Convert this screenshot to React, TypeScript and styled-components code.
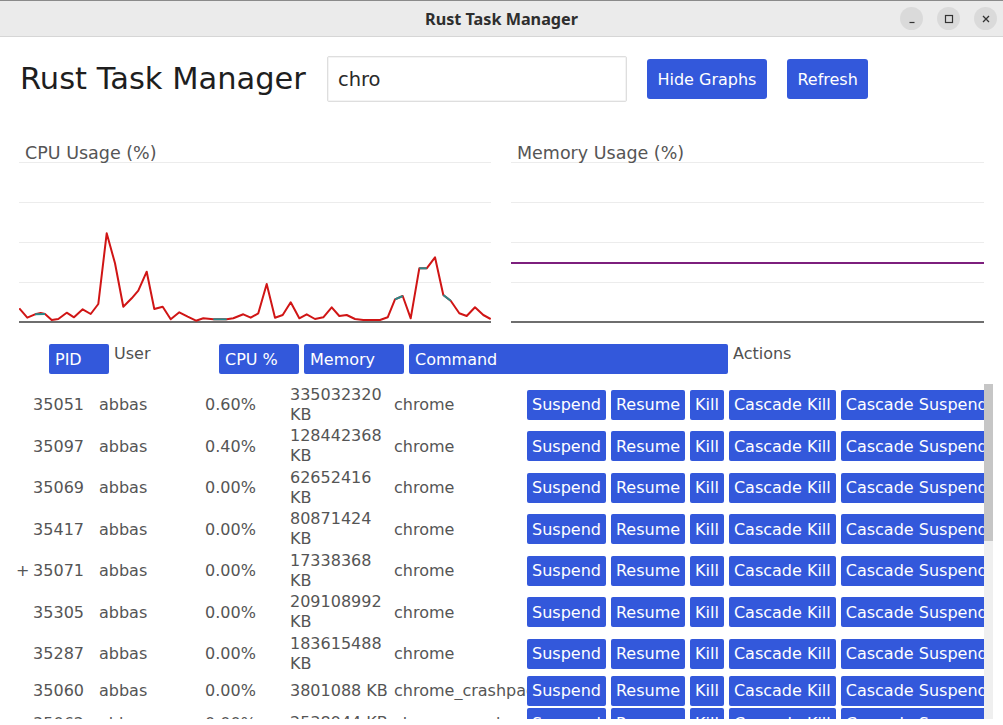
import React from "react";
import styled, { createGlobalStyle } from "styled-components";

const Global = createGlobalStyle`
  html, body { margin: 0; padding: 0; background: #ffffff; }
  body { font-family: "DejaVu Sans", "Liberation Sans", sans-serif; overflow: hidden; }
  * { box-sizing: border-box; }
`;

const Window = styled.div`
  width: 1003px;
  height: 725px;
  display: flex;
  flex-direction: column;
  background: #ffffff;
  overflow: hidden;
`;

const TitleBar = styled.div`
  height: 37px;
  flex-shrink: 0;
  display: grid;
  grid-template-columns: 1fr auto 1fr;
  align-items: center;
  background: #ebebeb;
  border-top: 1px solid #8a8a8a;
  border-bottom: 1px solid #d6d6d6;
`;

const Title = styled.div`
  grid-column: 2;
  font-family: "Noto Sans", "DejaVu Sans", sans-serif;
  font-weight: 700;
  font-size: 16.2px;
  color: #2e2e2e;
`;

const WinButtons = styled.div`
  grid-column: 3;
  justify-self: end;
  display: flex;
  gap: 14px;
  padding-right: 6px;
`;

const WinButton = styled.div`
  width: 23px;
  height: 23px;
  border-radius: 50%;
  background: #dadada;
  display: flex;
  align-items: center;
  justify-content: center;
  color: #333;
`;

const Header = styled.div`
  display: flex;
  align-items: center;
  margin-top: 19px;
  padding-left: 20px;
  height: 46px;
`;

const Heading = styled.h1`
  margin: 0 21px 0 0;
  font-size: 30.5px;
  font-weight: 400;
  color: #1e1e1e;
  line-height: 36px;
  white-space: nowrap;
`;

const Search = styled.div`
  width: 300px;
  height: 46px;
  flex-shrink: 0;
  border: 1px solid #dedede;
  box-shadow: inset 0 0 0 1px #f4f4f4;
  border-radius: 2px;
  padding-left: 10px;
  display: flex;
  align-items: center;
  font-size: 19.5px;
  color: #2a2a2a;
  margin-right: 20px;
`;

const TopButton = styled.button`
  height: 40px;
  padding: 0 10.5px;
  margin-right: 20px;
  border: none;
  border-radius: 3px;
  background: #3358db;
  color: #ffffff;
  font-family: "DejaVu Sans", sans-serif;
  font-size: 16px;
  cursor: pointer;
`;

const Charts = styled.div`
  display: grid;
  grid-template-columns: 472px 473px;
  column-gap: 20px;
  padding-left: 19px;
  margin-top: 41px;
`;

const ChartPanel = styled.div`
  display: flex;
  flex-direction: column;
`;

const ChartLabel = styled.div<{ $indent: number }>`
  font-size: 17.5px;
  color: #555555;
  line-height: 20px;
  padding-left: ${(p) => p.$indent}px;
  margin-bottom: -1px;
  position: relative;
  z-index: 1;
`;

const TableHeader = styled.div`
  display: grid;
  grid-template-columns: 60px 100px 80px 100px 319px auto;
  column-gap: 5px;
  align-items: start;
  padding-left: 49px;
  margin-top: 20px;
`;

const SortButton = styled.div`
  height: 30px;
  background: #3358db;
  color: #ffffff;
  border-radius: 2px;
  font-size: 16px;
  display: flex;
  align-items: center;
  padding-left: 6px;
`;

const HeaderLabel = styled.div`
  font-size: 16px;
  color: #505050;
  line-height: 18px;
  padding-top: 1px;
`;

const ScrollArea = styled.div`
  display: flex;
  margin-top: 10px;
  margin-right: 10px;
  height: 335px;
`;

const ScrollContent = styled.div`
  flex: 1;
  min-width: 0;
  overflow: hidden;
`;

const ScrollTrack = styled.div`
  width: 9px;
  flex-shrink: 0;
  background: #efefef;
  display: flex;
  flex-direction: column;
`;

const ScrollThumb = styled.div`
  height: 157px;
  background: #c6c6c6;
`;

const Row = styled.div`
  display: grid;
  grid-template-columns: 83px 106px 85px 104px 133px minmax(0, 1fr);
  align-items: center;
  min-height: 32.5px;
  padding-left: 16px;
  font-size: 16px;
  color: #555555;
`;

const PidCell = styled.div`
  display: flex;
  justify-content: space-between;
  padding-right: 15px;
`;

const Cell = styled.div`
  white-space: nowrap;
`;

const MemCell = styled.div`
  padding: 0.75px 2px 0.75px 0;
  line-height: 20px;
`;

const CmdCell = styled.div`
  white-space: nowrap;
  overflow: hidden;
  padding-right: 4px;
`;

const Actions = styled.div`
  display: flex;
  gap: 5px;
  overflow: hidden;
`;

const ActionButton = styled.div`
  flex-shrink: 0;
  height: 30px;
  padding: 0 5px;
  background: #3358db;
  color: #ffffff;
  border-radius: 2px;
  display: flex;
  align-items: center;
  white-space: nowrap;
  font-size: 16px;
`;

const cpuPoints: [number, number][] = [
  [0.3, 146.3], [8.3, 155.7], [16, 152.3], [21.7, 151], [26, 152], [32.7, 158], [39.3, 157],
  [47.7, 150.7], [55, 155.3], [63.7, 147.3], [71.7, 152], [79.3, 142], [87.7, 71.3], [96, 101.3],
  [104.3, 144.7], [112.7, 136.3], [119.3, 128.7], [127.7, 109.7], [135.3, 147], [143.7, 144.7],
  [151.7, 157.3], [160.3, 150.3], [168.7, 154.7], [177, 158.7], [184.3, 156.3], [194.3, 157.3],
  [207.7, 157.3], [214.3, 156.3], [224.3, 152.3], [231.7, 155.7], [239.3, 151.3], [247.7, 122],
  [256, 155.7], [263.7, 153], [271.7, 140.3], [280.3, 156.3], [287.7, 152.3], [296, 157],
  [304.3, 155.3], [312.7, 145.3], [320.3, 154], [327.7, 153], [336, 157], [344.3, 158], [361, 158],
  [368.7, 155.3], [376, 137.3], [383.7, 134], [391.7, 156.3], [400.3, 106.3], [407.7, 106.3],
  [416, 95.3], [424.3, 133], [431.7, 138.7], [440.3, 151.3], [447.7, 154], [456, 145.3],
  [464.3, 153], [471.7, 157],
];

const tealSegments: [number, number, number, number][] = [
  [16, 152.3, 26, 152],
  [194.3, 157.3, 207.7, 157.3],
  [376, 137.3, 383.7, 134],
  [400.3, 106.3, 407.7, 106.3],
  [424.3, 133, 431.7, 138.7],
];

const Grid: React.FC<{ width: number }> = ({ width }) => (
  <>
    {[0.5, 40.5, 80.5, 120.5].map((y) => (
      <line key={y} x1={0} x2={width} y1={y} y2={y} stroke="#ececec" strokeWidth={1} />
    ))}
    <line x1={0} x2={width} y1={160} y2={160} stroke="#6e6e6e" strokeWidth={2} />
  </>
);

const CpuChart = () => (
  <svg width={472} height={162} viewBox="0 0 472 162">
    <Grid width={472} />
    <polyline
      points={cpuPoints.map((p) => p.join(",")).join(" ")}
      fill="none"
      stroke="#d01515"
      strokeWidth={2}
      strokeLinejoin="round"
    />
    {tealSegments.map(([x1, y1, x2, y2], i) => (
      <line key={i} x1={x1} y1={y1} x2={x2} y2={y2} stroke="#2a8a8a" strokeWidth={2} />
    ))}
  </svg>
);

const MemChart = () => (
  <svg width={473} height={162} viewBox="0 0 473 162">
    <Grid width={473} />
    <line x1={0} x2={473} y1={101} y2={101} stroke="#7d1f7d" strokeWidth={2} />
  </svg>
);

type Proc = { pid: string; cpu: string; mem: string; cmd: string; marker?: boolean };

const procs: Proc[] = [
  { pid: "35051", cpu: "0.60%", mem: "335032320 KB", cmd: "chrome" },
  { pid: "35097", cpu: "0.40%", mem: "128442368 KB", cmd: "chrome" },
  { pid: "35069", cpu: "0.00%", mem: "62652416 KB", cmd: "chrome" },
  { pid: "35417", cpu: "0.00%", mem: "80871424 KB", cmd: "chrome" },
  { pid: "35071", cpu: "0.00%", mem: "17338368 KB", cmd: "chrome", marker: true },
  { pid: "35305", cpu: "0.00%", mem: "209108992 KB", cmd: "chrome" },
  { pid: "35287", cpu: "0.00%", mem: "183615488 KB", cmd: "chrome" },
  { pid: "35060", cpu: "0.00%", mem: "3801088 KB", cmd: "chrome_crashpad_handler" },
  { pid: "35062", cpu: "0.00%", mem: "2538944 KB", cmd: "chrome_crashpad_handler" },
  { pid: "35120", cpu: "0.00%", mem: "94371840 KB", cmd: "chrome" },
  { pid: "35133", cpu: "0.00%", mem: "71303168 KB", cmd: "chrome" },
];

const actions = ["Suspend", "Resume", "Kill", "Cascade Kill", "Cascade Suspend"];

export default function App() {
  return (
    <Window>
      <Global />
      <TitleBar>
        <Title>Rust Task Manager</Title>
        <WinButtons>
          <WinButton>
            <svg width="10" height="10" viewBox="0 0 10 10">
              <line x1="2.5" y1="8.5" x2="7.5" y2="8.5" stroke="#333" strokeWidth="1.2" />
            </svg>
          </WinButton>
          <WinButton>
            <svg width="10" height="10" viewBox="0 0 10 10">
              <rect x="1.5" y="1.5" width="7" height="7" fill="none" stroke="#333" strokeWidth="1.2" />
            </svg>
          </WinButton>
          <WinButton>
            <svg width="10" height="10" viewBox="0 0 10 10">
              <path d="M2 2 L8 8 M8 2 L2 8" stroke="#333" strokeWidth="1.3" />
            </svg>
          </WinButton>
        </WinButtons>
      </TitleBar>

      <Header>
        <Heading>Rust Task Manager</Heading>
        <Search>chro</Search>
        <TopButton>Hide Graphs</TopButton>
        <TopButton>Refresh</TopButton>
      </Header>

      <Charts>
        <ChartPanel>
          <ChartLabel $indent={6}>CPU Usage (%)</ChartLabel>
          <CpuChart />
        </ChartPanel>
        <ChartPanel>
          <ChartLabel $indent={6}>Memory Usage (%)</ChartLabel>
          <MemChart />
        </ChartPanel>
      </Charts>

      <TableHeader>
        <SortButton>PID</SortButton>
        <HeaderLabel>User</HeaderLabel>
        <SortButton>CPU %</SortButton>
        <SortButton>Memory</SortButton>
        <SortButton>Command</SortButton>
        <HeaderLabel>Actions</HeaderLabel>
      </TableHeader>

      <ScrollArea>
        <ScrollContent>
          {procs.map((p) => (
            <Row key={p.pid}>
              <PidCell>
                <span>{p.marker ? "+" : ""}</span>
                <span>{p.pid}</span>
              </PidCell>
              <Cell>abbas</Cell>
              <Cell>{p.cpu}</Cell>
              <MemCell>{p.mem}</MemCell>
              <CmdCell>{p.cmd}</CmdCell>
              <Actions>
                {actions.map((a) => (
                  <ActionButton key={a}>{a}</ActionButton>
                ))}
              </Actions>
            </Row>
          ))}
        </ScrollContent>
        <ScrollTrack>
          <ScrollThumb />
        </ScrollTrack>
      </ScrollArea>
    </Window>
  );
}
